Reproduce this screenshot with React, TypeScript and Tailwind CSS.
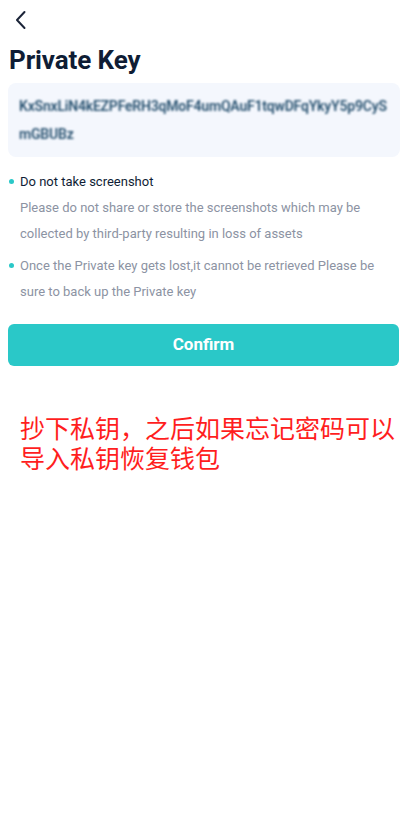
const tips = [
  {
    title: "Do not take screenshot",
    body: "Please do not share or store the screenshots which may be collected by third-party resulting in loss of assets",
  },
  {
    title: "",
    body: "Once the Private key gets lost,it cannot be retrieved Please be sure to back up the Private key",
  },
];

export default function App() {
  return (
    <div className="min-h-[817px] w-[408px] bg-white" style={{ fontFamily: "Roboto, 'Noto Sans', sans-serif" }}>
      {/* Header */}
      <div className="h-[40px] flex items-center pl-[13px]">
        <svg width="16" height="22" viewBox="0 0 16 22" fill="none">
          <path d="M11.5 3 L4 11 L11.5 19" stroke="#1b2438" strokeWidth="2" strokeLinecap="round" strokeLinejoin="round" />
        </svg>
      </div>
      <h1 className="px-[9px] pt-[2px] text-[26px] font-bold leading-[36px] text-[#0f1d35] tracking-[-0.1px]">Private Key</h1>

      {/* Key box */}
      <div className="mx-[8px] mt-[5px] rounded-[8px] bg-[#f4f7fd] px-[11px] py-[9px]">
        <p className="text-[14px] leading-[28px] font-semibold text-[#26506f] break-all blur-[1px] tracking-[-0.2px]">
          KxSnxLiN4kEZPFeRH3qMoF4umQAuF1tqwDFqYkyY5p9CySmGBUBz
        </p>
      </div>

      {/* Tips */}
      <div className="mt-[12px] pl-[9px] pr-[14px] flex flex-col gap-[6px]">
        {tips.map((t, i) => (
          <div key={i} className="flex">
            <span className="mt-[10px] mr-[6px] h-[5px] w-[5px] shrink-0 rounded-full bg-[#2ac8c8]" />
            <div className="text-[13px] leading-[26px]">
              {t.title && <div className="text-[#0f1d35]">{t.title}</div>}
              <div className="text-[#8c93a3]">{t.body}</div>
            </div>
          </div>
        ))}
      </div>

      {/* Confirm */}
      <button className="mx-[8px] mt-[19px] h-[42px] w-[391px] rounded-[6px] bg-[#2ac8c8] text-[17px] font-bold text-white">
        Confirm
      </button>

      <p
        className="mt-[46px] pl-[20px] pr-[8px] text-[25px] leading-[30px] text-[#ff1e1e]"
        style={{ fontFamily: "'Noto Sans CJK SC', sans-serif" }}
      >
        抄下私钥，之后如果忘记密码可以导入私钥恢复钱包
      </p>
    </div>
  );
}
